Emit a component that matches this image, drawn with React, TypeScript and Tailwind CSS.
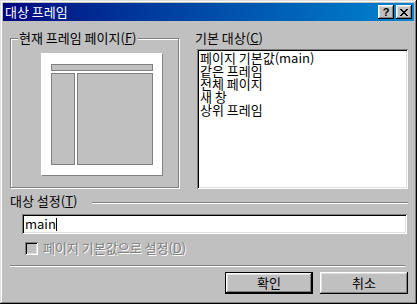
import React from "react";

const FONT = { fontFamily: '"Noto Sans CJK KR", "Liberation Sans", sans-serif' };

const RAISED =
  "shadow-[inset_-1px_-1px_0_#000,inset_1px_1px_0_#fff,inset_-2px_-2px_0_#808080,inset_2px_2px_0_#dfdfdf]";
const SUNKEN =
  "shadow-[inset_1px_1px_0_#808080,inset_-1px_-1px_0_#fff,inset_2px_2px_0_#000,inset_-2px_-2px_0_#dfdfdf]";

const LIST_ITEMS = ["페이지 기본값(main)", "같은 프레임", "전체 페이지", "새 창", "상위 프레임"];

function TitleButton({ children }: { children: React.ReactNode }) {
  return (
    <div className={`w-[16px] h-[14px] bg-[#c0c0c0] flex items-center justify-center ${RAISED}`}>
      {children}
    </div>
  );
}

function Button({ label, isDefault }: { label: string; isDefault?: boolean }) {
  return (
    <div
      className={`w-[88px] h-[22px] bg-[#c0c0c0] flex items-center justify-center text-[13px] leading-[14px] text-black ${
        isDefault
          ? "shadow-[inset_0_0_0_1px_#000,inset_-2px_-2px_0_#000,inset_2px_2px_0_#fff,inset_-3px_-3px_0_#808080,inset_3px_3px_0_#dfdfdf]"
          : RAISED
      }`}
    >
      {label}
    </div>
  );
}

export default function App() {
  return (
    <div className="w-[417px] h-[304px] bg-[#c0c0c0] p-[3px] flex flex-col shadow-[inset_-1px_-1px_0_#000,inset_1px_1px_0_#dfdfdf,inset_-2px_-2px_0_#808080,inset_2px_2px_0_#fff]" style={FONT}>
      {/* Title bar */}
      <div className="h-[18px] flex items-center pl-[2px] pr-[2px] bg-gradient-to-r from-[#000080] to-[#1084d0]">
        <span className="text-white text-[13px] leading-[14px] flex-1">대상 프레임</span>
        <div className="flex gap-[2px]">
          <TitleButton>
            <span className="text-[11px] leading-[11px] font-bold text-black" style={{ fontFamily: '"Liberation Sans", sans-serif' }}>?</span>
          </TitleButton>
          <TitleButton>
            <svg width="8" height="7" viewBox="0 0 8 7" shapeRendering="crispEdges">
              <path d="M0 0h2v1h-2zM6 0h2v1h-2zM1 1h2v1h-2zM5 1h2v1h-2zM2 2h4v1h-4zM3 3h2v1h-2zM2 4h4v1h-4zM1 5h2v1h-2zM5 5h2v1h-2zM0 6h2v1h-2zM6 6h2v1h-2z" fill="#000" />
            </svg>
          </TitleButton>
        </div>
      </div>

      {/* Body */}
      <div className="flex flex-col pl-[7px] pr-[6px] pt-[10px] text-[13px] leading-[14px] text-black">
        <div className="flex">
          <fieldset className="w-[169px] h-[157px] border border-[#808080] shadow-[inset_1px_1px_0_#fff,1px_1px_0_#fff]">
            <legend className="ml-[7px] px-[1px] bg-[#c0c0c0] leading-[14px]">
              현재 프레임 페이지(<span className="underline">F</span>)
            </legend>
            <div className="ml-[30px] mt-[8px] w-[121px] h-[122px] bg-white pl-[10px] pt-[11px] shadow-[1px_1px_0_#808080]">
              <div className="w-[102px] h-[7px] border border-[#808080] bg-[#c0c0c0]" />
              <div className="flex gap-[2px] mt-[2px]">
                <div className="w-[24px] h-[92px] border border-[#808080] bg-[#c0c0c0]" />
                <div className="w-[76px] h-[92px] border border-[#808080] bg-[#c0c0c0]" />
              </div>
            </div>
          </fieldset>

          <div className="ml-[16px] flex flex-col">
            <div className="leading-[14px]">
              기본 대상(<span className="underline">C</span>)
            </div>
            <div className={`ml-[2px] mt-[4px] w-[211px] h-[140px] bg-white pl-[3px] pt-[2px] ${SUNKEN}`}>
              {LIST_ITEMS.map((item) => (
                <div key={item} className="leading-[13px] whitespace-nowrap">
                  {item}
                </div>
              ))}
            </div>
          </div>
        </div>

        {/* 대상 설정 */}
        <div className="flex items-center mt-[5px]">
          <div className="w-[82px] leading-[14px]">
            대상 설정(<span className="underline">T</span>)
          </div>
          <div className="flex-1 h-[2px] mt-[3px] border-t border-[#808080] border-b border-b-white" />
        </div>

        <div className={`ml-[12px] mt-[6px] w-[385px] h-[20px] bg-white pl-[3px] flex items-center ${SUNKEN}`}>
          <span className="leading-[14px]">main</span>
          <span className="inline-block w-px h-[13px] bg-black" />
        </div>

        <div className="flex items-center ml-[15px] mt-[7px]">
          <div className={`w-[13px] h-[13px] bg-[#c0c0c0] ${SUNKEN}`} />
          <span className="ml-[5px] text-[#808080] [text-shadow:1px_1px_0_#fff]">
            페이지 기본값으로 설정(<span className="underline">D</span>)
          </span>
        </div>

        <div className="mt-[10px] w-[395px] h-[2px] border-t border-[#808080] border-b border-b-white" />

        <div className="flex justify-end gap-[7px] mt-[5px]">
          <Button label="확인" isDefault />
          <Button label="취소" />
        </div>
      </div>
    </div>
  );
}
